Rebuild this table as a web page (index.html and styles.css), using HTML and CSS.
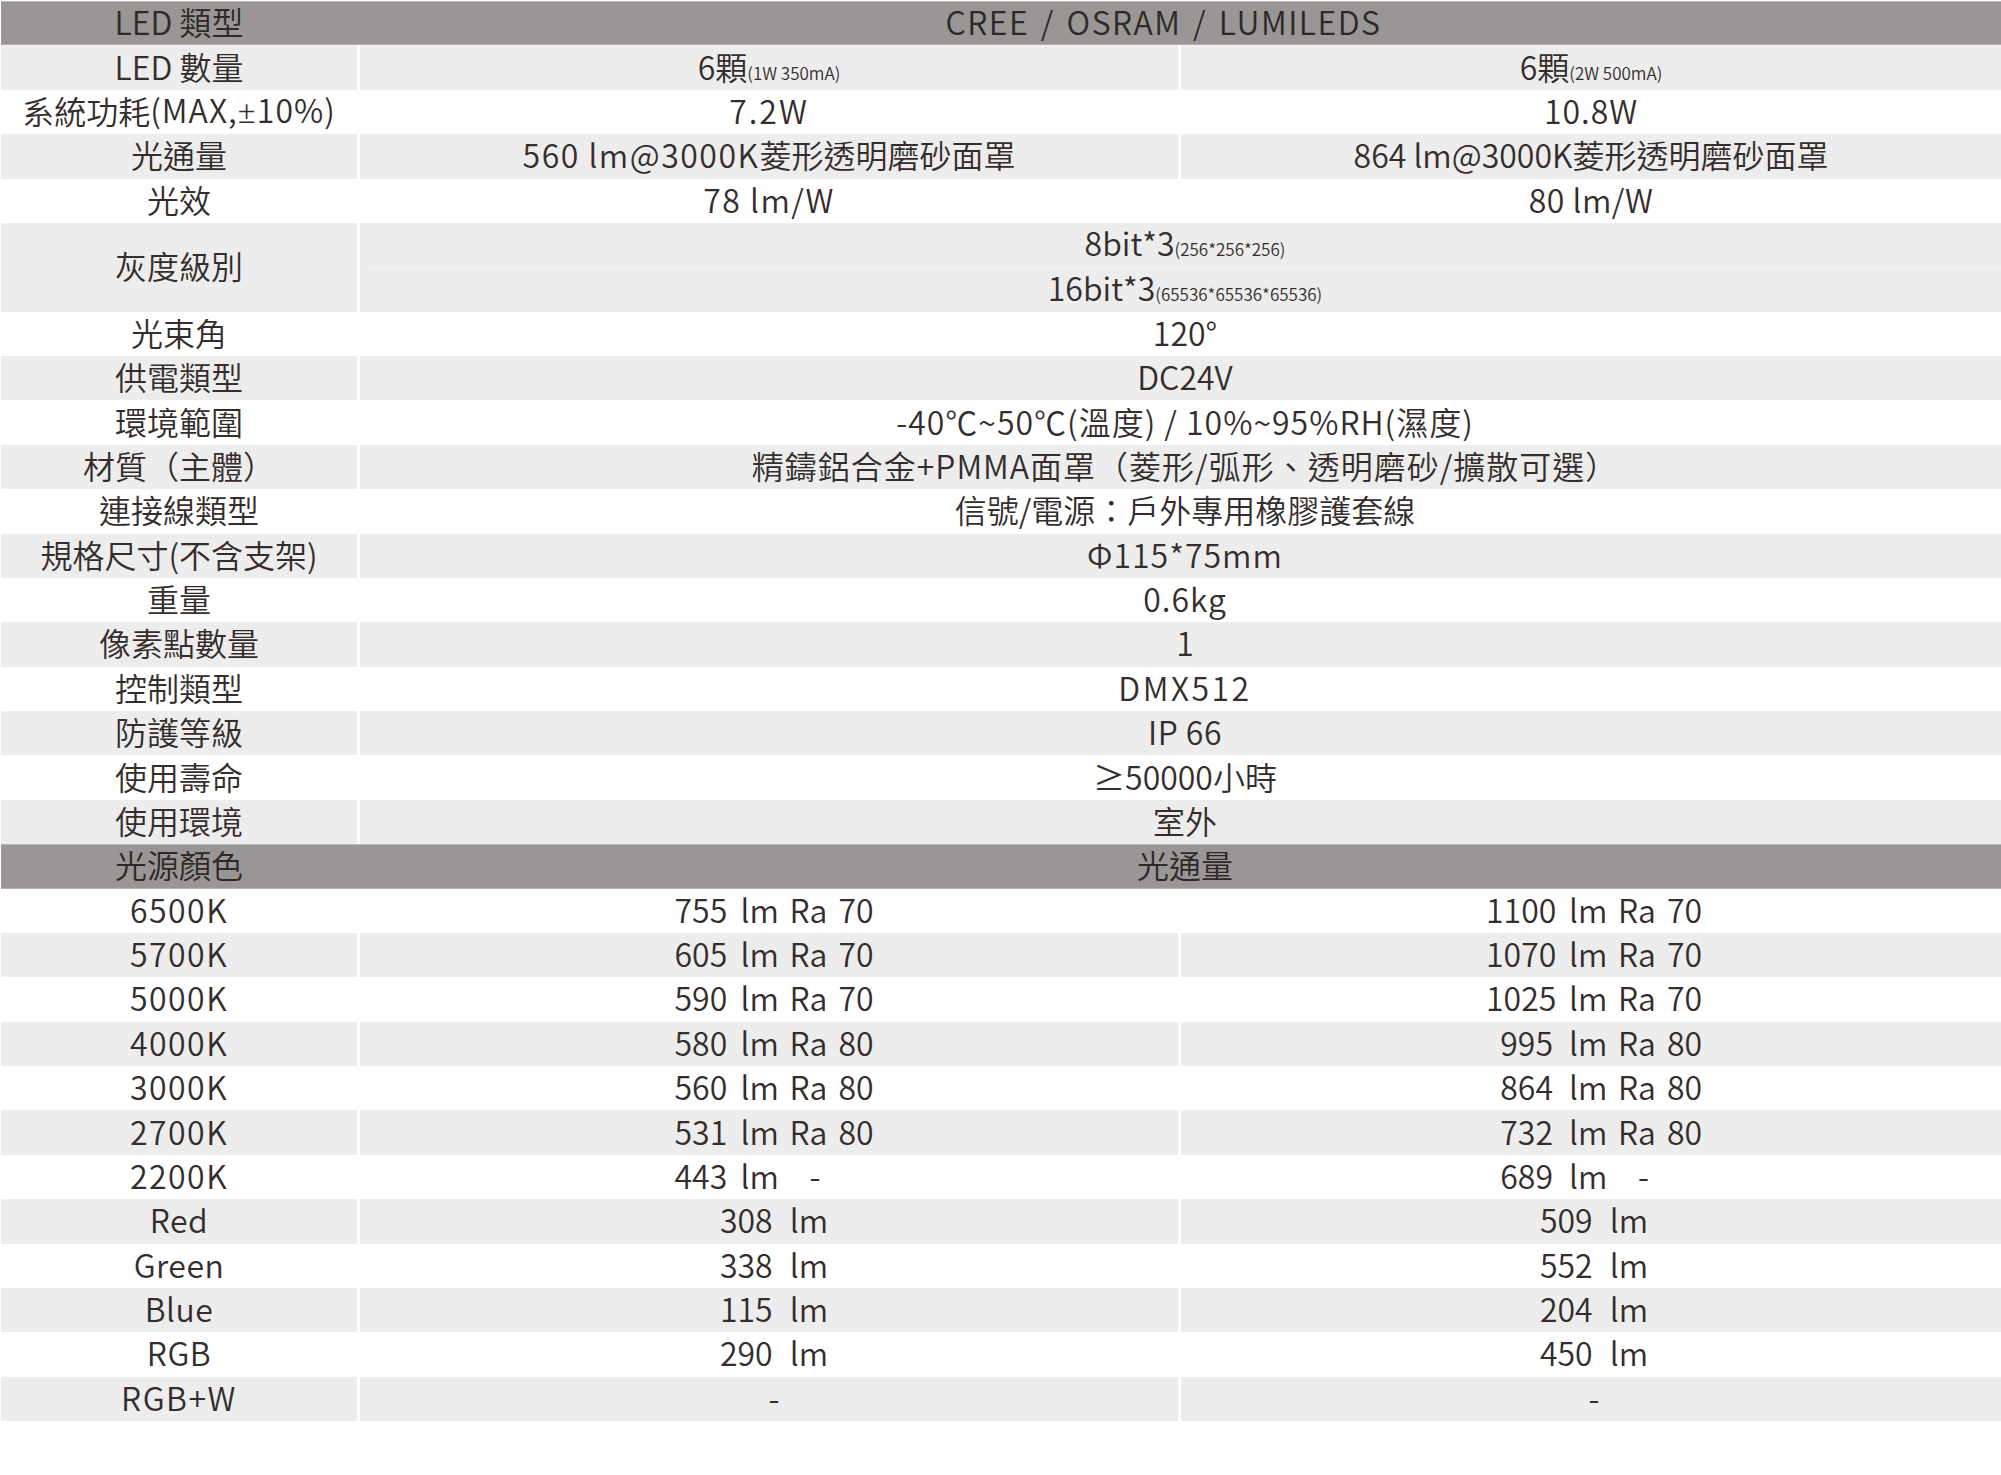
FILE: index.html
```html
<!DOCTYPE html>
<html lang="zh-Hant">
<head>
<meta charset="utf-8">
<title>規格表</title>
<link rel="stylesheet" href="styles.css">
</head>
<body>
<div class="spec">
  <div class="row head"><div class="lbl">LED 類型</div><div class="val span brand"><span>CREE / OSRAM / LUMILEDS</span></div></div>
  <div class="row grey"><div class="lbl">LED 數量</div><div class="val"><span>6顆<small>(1W 350mA)</small></span></div><div class="val"><span>6顆<small>(2W 500mA)</small></span></div></div>
  <div class="row"><div class="lbl">系統功耗<span class="lat">(MAX,<span class="pm">±</span>10%)</span></div><div class="val lat2"><span>7.2W</span></div><div class="val lat"><span>10.8W</span></div></div>
  <div class="row grey"><div class="lbl">光通量</div><div class="val"><span><span class="lat15">560 lm@3000K</span>菱形透明磨砂面罩</span></div><div class="val"><span>864 lm@3000K菱形透明磨砂面罩</span></div></div>
  <div class="row"><div class="lbl">光效</div><div class="val lat15"><span>78 lm/W</span></div><div class="val lat05"><span>80 lm/W</span></div></div>
  <div class="row grey double"><div class="lbl">灰度級別</div><div class="val span stack"><div class="sub"><span>8bit*3<small>(256*256*256)</small></span></div><div class="sub"><span>16bit*3<small>(65536*65536*65536)</small></span></div></div></div>
  <div class="row"><div class="lbl">光束角</div><div class="val span"><span>120°</span></div></div>
  <div class="row grey"><div class="lbl">供電類型</div><div class="val span"><span>DC24V</span></div></div>
  <div class="row"><div class="lbl">環境範圍</div><div class="val span lat"><span>-40℃~50℃(溫度) / 10%~95%RH(濕度)</span></div></div>
  <div class="row grey"><div class="lbl">材質（主體）</div><div class="val span lat"><span>精鑄鋁合金+PMMA面罩（菱形/弧形、透明磨砂/擴散可選）</span></div></div>
  <div class="row"><div class="lbl">連接線類型</div><div class="val span"><span>信號/電源：戶外專用橡膠護套線</span></div></div>
  <div class="row grey"><div class="lbl">規格尺寸(不含支架)</div><div class="val span lat"><span>Φ115*75mm</span></div></div>
  <div class="row"><div class="lbl">重量</div><div class="val span lat"><span>0.6kg</span></div></div>
  <div class="row grey"><div class="lbl">像素點數量</div><div class="val span"><span>1</span></div></div>
  <div class="row"><div class="lbl">控制類型</div><div class="val span lat25"><span>DMX512</span></div></div>
  <div class="row grey"><div class="lbl">防護等級</div><div class="val span lat05"><span>IP 66</span></div></div>
  <div class="row"><div class="lbl">使用壽命</div><div class="val span"><span>≥50000小時</span></div></div>
  <div class="row grey"><div class="lbl">使用環境</div><div class="val span"><span>室外</span></div></div>
  <div class="row head"><div class="lbl">光源顏色</div><div class="val span"><span>光通量</span></div></div>

  <div class="row lumrow"><div class="lbl">6500K</div><div class="val c1"><span class="lum"><span class="n">755</span><span>lm</span><span>Ra</span><span>70</span></span></div><div class="val c2"><span class="lum w4"><span class="n">1100</span><span>lm</span><span>Ra</span><span>70</span></span></div></div>
  <div class="row grey lumrow"><div class="lbl">5700K</div><div class="val c1"><span class="lum"><span class="n">605</span><span>lm</span><span>Ra</span><span>70</span></span></div><div class="val c2"><span class="lum w4"><span class="n">1070</span><span>lm</span><span>Ra</span><span>70</span></span></div></div>
  <div class="row lumrow"><div class="lbl">5000K</div><div class="val c1"><span class="lum"><span class="n">590</span><span>lm</span><span>Ra</span><span>70</span></span></div><div class="val c2"><span class="lum w4"><span class="n">1025</span><span>lm</span><span>Ra</span><span>70</span></span></div></div>
  <div class="row grey lumrow"><div class="lbl">4000K</div><div class="val c1"><span class="lum"><span class="n">580</span><span>lm</span><span>Ra</span><span>80</span></span></div><div class="val c2"><span class="lum w4"><span class="n">995</span><span>lm</span><span>Ra</span><span>80</span></span></div></div>
  <div class="row lumrow"><div class="lbl">3000K</div><div class="val c1"><span class="lum"><span class="n">560</span><span>lm</span><span>Ra</span><span>80</span></span></div><div class="val c2"><span class="lum w4"><span class="n">864</span><span>lm</span><span>Ra</span><span>80</span></span></div></div>
  <div class="row grey lumrow"><div class="lbl">2700K</div><div class="val c1"><span class="lum"><span class="n">531</span><span>lm</span><span>Ra</span><span>80</span></span></div><div class="val c2"><span class="lum w4"><span class="n">732</span><span>lm</span><span>Ra</span><span>80</span></span></div></div>
  <div class="row lumrow"><div class="lbl">2200K</div><div class="val c1"><span class="lum"><span class="n">443</span><span>lm</span><span class="dash">-</span><span></span></span></div><div class="val c2"><span class="lum w4"><span class="n">689</span><span>lm</span><span class="dash">-</span><span></span></span></div></div>
  <div class="row grey lumrow"><div class="lbl narrow">Red</div><div class="val c1 words"><span>308 lm</span></div><div class="val c2 words"><span>509 lm</span></div></div>
  <div class="row lumrow"><div class="lbl narrow">Green</div><div class="val c1 words"><span>338 lm</span></div><div class="val c2 words"><span>552 lm</span></div></div>
  <div class="row grey lumrow"><div class="lbl narrow">Blue</div><div class="val c1 words"><span>115 lm</span></div><div class="val c2 words"><span>204 lm</span></div></div>
  <div class="row lumrow"><div class="lbl narrow">RGB</div><div class="val c1 words"><span>290 lm</span></div><div class="val c2 words"><span>450 lm</span></div></div>
  <div class="row grey lumrow"><div class="lbl">RGB+W</div><div class="val c1"><span>-</span></div><div class="val c2"><span>-</span></div></div>
</div>
</body>
</html>
```
FILE: styles.css
```css
html, body {
  margin: 0;
  padding: 0;
  background: #ffffff;
}

body {
  padding-top: 1px;
  padding-left: 1px;
  font-family: "Noto Sans CJK TC", "Noto Sans", sans-serif;
  font-weight: 350;
  font-size: 32px;
  color: #342d2c;
}

.spec {
  width: 2000px;
  display: flex;
  flex-direction: column;
}

.row {
  display: grid;
  grid-template-columns: 356px 818px 820px;
  column-gap: 3px;
  height: 44.375px;
}

.row.double {
  height: 88.75px;
}

.lbl,
.val {
  display: flex;
  align-items: center;
  justify-content: center;
  line-height: 1;
  padding-bottom: 4px;
  white-space: nowrap;
  box-sizing: border-box;
}

.val.span {
  grid-column: 2 / 4;
  padding-left: 9px;
}

.row.grey .lbl,
.row.grey .val {
  background: #ecedec;
}

.row.head {
  background: #9a9695;
  box-shadow: inset 0 1px 0 #b9b6b5, inset 0 -1px 0 #b3b0af;
  color: #2e2928;
}

.val.brand {
  padding-left: 0;
  padding-right: 34px;
  letter-spacing: 1.5px;
  word-spacing: 3px;
}

.pm {
  font-family: "Noto Sans", sans-serif;
  font-weight: 300;
}

.lat05 { letter-spacing: 0.5px; }
.lat { letter-spacing: 1px; }
.lat15 { letter-spacing: 1.5px; }
.lat2 { letter-spacing: 2px; }
.lat25 { letter-spacing: 2.5px; }

small {
  font-size: 17px;
  line-height: 1;
  letter-spacing: 0;
}

.stack {
  flex-direction: column;
  align-items: stretch;
  padding-bottom: 0;
}

.sub {
  flex: 1;
  display: flex;
  align-items: center;
  justify-content: center;
  padding-bottom: 6px;
  box-sizing: border-box;
}

.sub + .sub {
  border-top: 1px solid #f4f5f4;
}

.lumrow .lbl {
  letter-spacing: 1.5px;
}

.lumrow .lbl.narrow {
  letter-spacing: 0.5px;
}

.lum {
  display: inline-grid;
  grid-template-columns: 50px 33px 33px 35px;
  column-gap: 16px;
}

.lum.w4 {
  grid-template-columns: 67px 33px 33px 35px;
}

.lum .n {
  text-align: right;
}

.lum .dash {
  text-align: right;
  padding-right: 2px;
}

.val.c1 {
  padding-left: 10px;
}

.val.c2 {
  padding-left: 6px;
}

.words {
  word-spacing: 10px;
}
```
